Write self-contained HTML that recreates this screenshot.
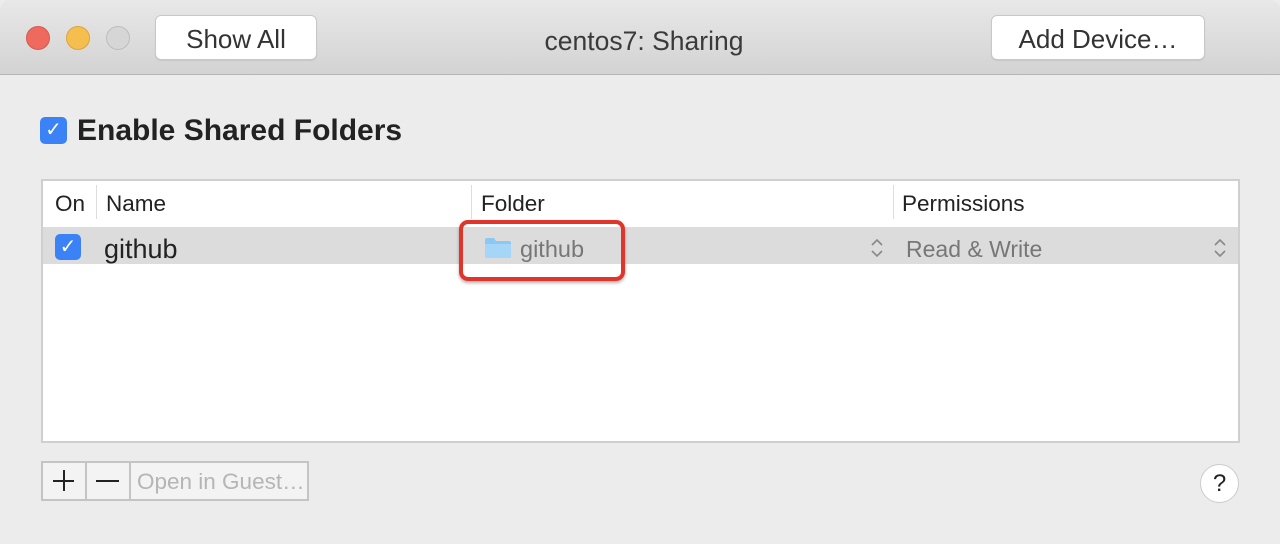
<!DOCTYPE html>
<html><head><style>
*{margin:0;padding:0;box-sizing:border-box}
body{width:1280px;height:544px;background:#ececec;font-family:"Liberation Sans",Arial,sans-serif;position:relative;overflow:hidden}
.a{position:absolute}
.tb{left:0;top:0;width:1280px;height:75px;background:linear-gradient(#e8e8e8,#d3d3d3);border-bottom:1px solid #b5b5b5;border-radius:10px 10px 0 0}
.dot{width:24px;height:24px;border-radius:50%;top:26px}
.btn{background:#fff;border:1px solid #c8c8c8;border-radius:6px;font-size:26px;color:#333;text-align:center;line-height:46px;box-shadow:0 1px 1px rgba(0,0,0,.08)}
.cb{width:27px;height:27px;background:#3b82f6;border-radius:5px;color:#fff;font-size:20px;text-align:center;line-height:27px}
.t{font-size:22.5px;color:#222}
.sep{width:1px;height:34px;background:#ddd;top:185px}
</style></head><body>
<div class="a tb"></div>
<div class="a dot" style="left:26px;background:#ee6a5f;border:1px solid #d7574c"></div>
<div class="a dot" style="left:66px;background:#f5bf4f;border:1px solid #dba43c"></div>
<div class="a dot" style="left:106px;background:#d6d6d6;border:1px solid #bdbdbd"></div>
<div class="a btn" style="left:155px;top:15px;width:162px;height:45px">Show All</div>
<div class="a" style="left:0;width:1288px;top:26px;text-align:center;font-size:26.5px;color:#3a3a3a">centos7: Sharing</div>
<div class="a btn" style="left:991px;top:15px;width:214px;height:45px">Add Device…</div>
<div class="a cb" style="left:40px;top:117px">✓</div>
<div class="a" style="left:77px;top:114px;font-size:30px;font-weight:bold;color:#222">Enable Shared Folders</div>
<div class="a" style="left:41px;top:179px;width:1199px;height:264px;background:#fff;border:2px solid #cfcfcf"></div>
<div class="a t" style="left:55px;top:191px">On</div>
<div class="a sep" style="left:96px"></div>
<div class="a t" style="left:106px;top:191px">Name</div>
<div class="a sep" style="left:471px"></div>
<div class="a t" style="left:481px;top:191px">Folder</div>
<div class="a sep" style="left:893px"></div>
<div class="a t" style="left:902px;top:191px">Permissions</div>
<div class="a" style="left:43px;top:227px;width:1195px;height:37px;background:#dcdcdc"></div>
<div class="a cb" style="left:55px;top:234px;width:26px;height:26px">✓</div>
<div class="a" style="left:104px;top:234px;font-size:27px;color:#222">github</div>
<svg class="a" style="left:484px;top:237px" width="28" height="22"><path d="M1 3q0-2 2-2h7l2 3h13q2 0 2 2v13q0 2-2 2H3q-2 0-2-2z" fill="#8cc8f2"/><path d="M1 7h26v12q0 2-2 2H3q-2 0-2-2z" fill="#a5d6f7"/></svg>
<div class="a" style="left:520px;top:236px;font-size:23.5px;color:#777">github</div>
<div class="a" style="left:459px;top:220px;width:166px;height:61px;border:4px solid #e0352b;border-radius:9px;box-shadow:0 2px 3px rgba(0,0,0,.3)"></div>
<svg class="a" style="left:870px;top:237px" width="14" height="22"><path d="M2 8l5-5 5 5M2 14l5 5 5-5" fill="none" stroke="#888" stroke-width="1.6"/></svg>
<div class="a" style="left:906px;top:236px;font-size:23px;color:#777">Read &amp; Write</div>
<svg class="a" style="left:1213px;top:237px" width="14" height="22"><path d="M2 8l5-5 5 5M2 14l5 5 5-5" fill="none" stroke="#888" stroke-width="1.6"/></svg>
<div class="a" style="left:41px;top:461px;width:268px;height:40px;border:2px solid #c4c4c4;background:#f3f3f3"></div>
<div class="a" style="left:85px;top:461px;width:2px;height:40px;background:#c4c4c4"></div>
<div class="a" style="left:129px;top:461px;width:2px;height:40px;background:#c4c4c4"></div>
<div class="a" style="left:53px;top:480px;width:21px;height:2px;background:#222"></div>
<div class="a" style="left:63px;top:470px;width:2px;height:21px;background:#222"></div>
<div class="a" style="left:96px;top:480px;width:23px;height:2px;background:#222"></div>
<div class="a" style="left:137px;top:469px;font-size:22.5px;color:#b5b5b5">Open in Guest…</div>
<div class="a" style="left:1200px;top:464px;width:39px;height:39px;border-radius:50%;background:#fff;border:1px solid #ccc;text-align:center;line-height:38px;font-size:24px;color:#222">?</div>
</body></html>
